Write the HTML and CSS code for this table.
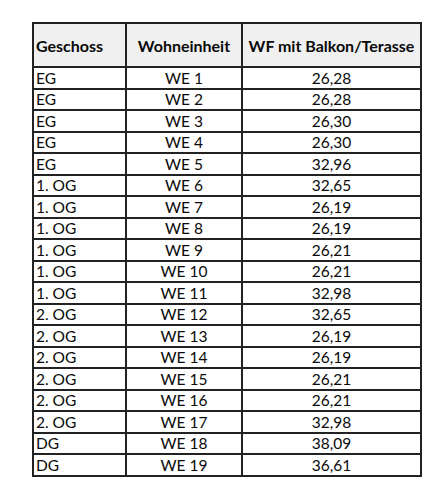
FILE: index.html
```html
<!DOCTYPE html>
<html lang="de">
<head>
<meta charset="utf-8">
<title>Wohnflächen</title>
<link rel="stylesheet" href="styles.css">
</head>
<body>
<table class="sheet">
  <colgroup>
    <col class="c1">
    <col class="c2">
    <col class="c3">
  </colgroup>
  <thead>
    <tr>
      <th class="left">Geschoss</th>
      <th>Wohneinheit</th>
      <th>WF mit Balkon/Terasse</th>
    </tr>
  </thead>
  <tbody>
    <tr><td class="left">EG</td><td>WE 1</td><td>26,28</td></tr>
    <tr><td class="left">EG</td><td>WE 2</td><td>26,28</td></tr>
    <tr><td class="left">EG</td><td>WE 3</td><td>26,30</td></tr>
    <tr><td class="left">EG</td><td>WE 4</td><td>26,30</td></tr>
    <tr><td class="left">EG</td><td>WE 5</td><td>32,96</td></tr>
    <tr><td class="left">1. OG</td><td>WE 6</td><td>32,65</td></tr>
    <tr><td class="left">1. OG</td><td>WE 7</td><td>26,19</td></tr>
    <tr><td class="left">1. OG</td><td>WE 8</td><td>26,19</td></tr>
    <tr><td class="left">1. OG</td><td>WE 9</td><td>26,21</td></tr>
    <tr><td class="left">1. OG</td><td>WE 10</td><td>26,21</td></tr>
    <tr><td class="left">1. OG</td><td>WE 11</td><td>32,98</td></tr>
    <tr><td class="left">2. OG</td><td>WE 12</td><td>32,65</td></tr>
    <tr><td class="left">2. OG</td><td>WE 13</td><td>26,19</td></tr>
    <tr><td class="left">2. OG</td><td>WE 14</td><td>26,19</td></tr>
    <tr><td class="left">2. OG</td><td>WE 15</td><td>26,21</td></tr>
    <tr><td class="left">2. OG</td><td>WE 16</td><td>26,21</td></tr>
    <tr><td class="left">2. OG</td><td>WE 17</td><td>32,98</td></tr>
    <tr><td class="left">DG</td><td>WE 18</td><td>38,09</td></tr>
    <tr><td class="left">DG</td><td>WE 19</td><td>36,61</td></tr>
  </tbody>
</table>
</body>
</html>
```

FILE: styles.css
```css
html, body {
  margin: 0;
  padding: 0;
  background: #ffffff;
}

body {
  padding: 22px 0 0 32px;
  font-family: Lato, "Liberation Sans", sans-serif;
  color: #0a0a0a;
}

.sheet {
  border-collapse: collapse;
  table-layout: fixed;
  width: 388px;
}

.c1 { width: 93px; }
.c2 { width: 116px; }
.c3 { width: 179px; }

.sheet th,
.sheet td {
  border: 2px solid #222222;
  padding: 0 2px;
  text-align: center;
  white-space: nowrap;
  overflow: hidden;
}

.sheet th {
  height: 42px;
  background: #f0f0f0;
  font-weight: 700;
  font-size: 16px;
  vertical-align: middle;
}

.sheet td {
  height: 18.5px;
  font-size: 15.5px;
  line-height: 17px;
  vertical-align: bottom;
  padding-bottom: 1px;
}

.sheet .left {
  text-align: left;
}
```
